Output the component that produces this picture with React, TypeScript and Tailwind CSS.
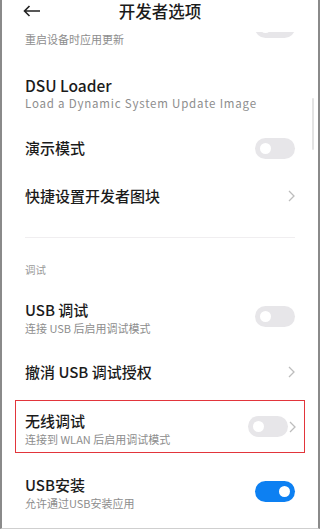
import type { ReactNode } from "react";

const FONT = { fontFamily: '"Noto Sans CJK SC", "Noto Sans", sans-serif' };

const Toggle = ({ on = false, className = "" }: { on?: boolean; className?: string }) => (
  <span
    className={`relative inline-flex h-[21px] w-[40px] shrink-0 items-center rounded-full px-[5px] ${
      on ? "justify-end bg-[#0d80f2]" : "justify-start bg-[#e7e6e9]"
    } ${className}`}
  >
    <span className="h-[11px] w-[11px] rounded-full bg-white" />
  </span>
);

const Chevron = () => (
  <svg width="7" height="12" viewBox="0 0 7 12" className="shrink-0" aria-hidden="true">
    <polyline points="1,1 6,6 1,11" fill="none" stroke="#bdbdbd" strokeWidth="1.3" />
  </svg>
);

const Texts = ({ title, sub }: { title: string; sub?: string }) => (
  <div className="flex min-w-0 flex-col">
    <span className="text-[15px] font-medium leading-[20px] text-[#1b1b1b]">{title}</span>
    {sub && <span className="text-[11px] leading-[16px] text-[#8d8d8d]">{sub}</span>}
  </div>
);

const Row = ({ h, children }: { h: string; children: ReactNode }) => (
  <div className={`flex items-center justify-between pl-[23px] pr-[23px] ${h}`}>{children}</div>
);

export default function App() {
  return (
    <div
      className="relative flex h-[529px] w-[320px] flex-col overflow-hidden border-x-2 border-b border-x-[#8a8a8a] border-b-[#cfcfcf] bg-white"
      style={FONT}
    >
      {/* header */}
      <div className="relative z-10 h-[32px] bg-white">
        <div className="relative mt-px flex h-[20px] items-center px-[21px]">
          <svg width="18" height="12" viewBox="0 0 18 12" aria-hidden="true">
            <path d="M17 6H1.5M6.5 1L1.5 6l5 5" fill="none" stroke="#222" strokeWidth="1.6" />
          </svg>
          <span className="absolute left-0 right-0 top-0 text-center text-[16.5px] font-medium leading-[20px] text-[#1b1b1b]">
            开发者选项
          </span>
        </div>
      </div>

      {/* list, scrolled under the header */}
      <div className="-mt-[32px] flex flex-col">
        <div className="flex h-[62px] items-start justify-between pl-[23px] pr-[23px] pt-[11px]">
          <Texts title="更新 APEX 模块" sub="重启设备时应用更新" />
          <Toggle className="mt-[6px]" />
        </div>

        <Row h="h-[62px]">
          <div className="flex flex-col">
            <span className="text-[15.5px] font-medium leading-[20px] text-[#1b1b1b]">DSU Loader</span>
            <span className="text-[11.5px] leading-[16px] tracking-[0.8px] text-[#8d8d8d]">
              Load a Dynamic System Update Image
            </span>
          </div>
        </Row>

        <Row h="h-[48px]">
          <Texts title="演示模式" />
          <Toggle />
        </Row>

        <Row h="h-[48px]">
          <Texts title="快捷设置开发者图块" />
          <Chevron />
        </Row>

        <div className="flex h-[34px] items-center px-[23px]">
          <div className="h-px w-full bg-[#f0eef0]" />
        </div>

        <div className="flex h-[32px] items-center px-[23px] text-[10.5px] text-[#9a9a9a]">调试</div>

        <Row h="h-[64px]">
          <Texts title="USB 调试" sub="连接 USB 后启用调试模式" />
          <Toggle className="mb-[4px]" />
        </Row>

        <Row h="h-[44px]">
          <Texts title="撤消 USB 调试授权" />
          <Chevron />
        </Row>

        <div className="px-[13px] pb-[5px] pt-[6px]">
          <div className="flex h-[53px] items-center justify-between border border-[#e2353b] pl-[9px] pr-[8px] pt-[5px]">
            <Texts title="无线调试" sub="连接到 WLAN 后启用调试模式" />
            <div className="mb-[5px] flex items-center gap-[1px]">
              <Toggle />
              <Chevron />
            </div>
          </div>
        </div>

        <Row h="h-[70px]">
          <Texts title="USB安装" sub="允许通过USB安装应用" />
          <Toggle on className="mb-[4px]" />
        </Row>
      </div>

      {/* scrollbar */}
      <div className="absolute left-[310px] top-[98px] h-[52px] w-[2px] rounded-full bg-[#e3e3e3]" />
    </div>
  );
}
